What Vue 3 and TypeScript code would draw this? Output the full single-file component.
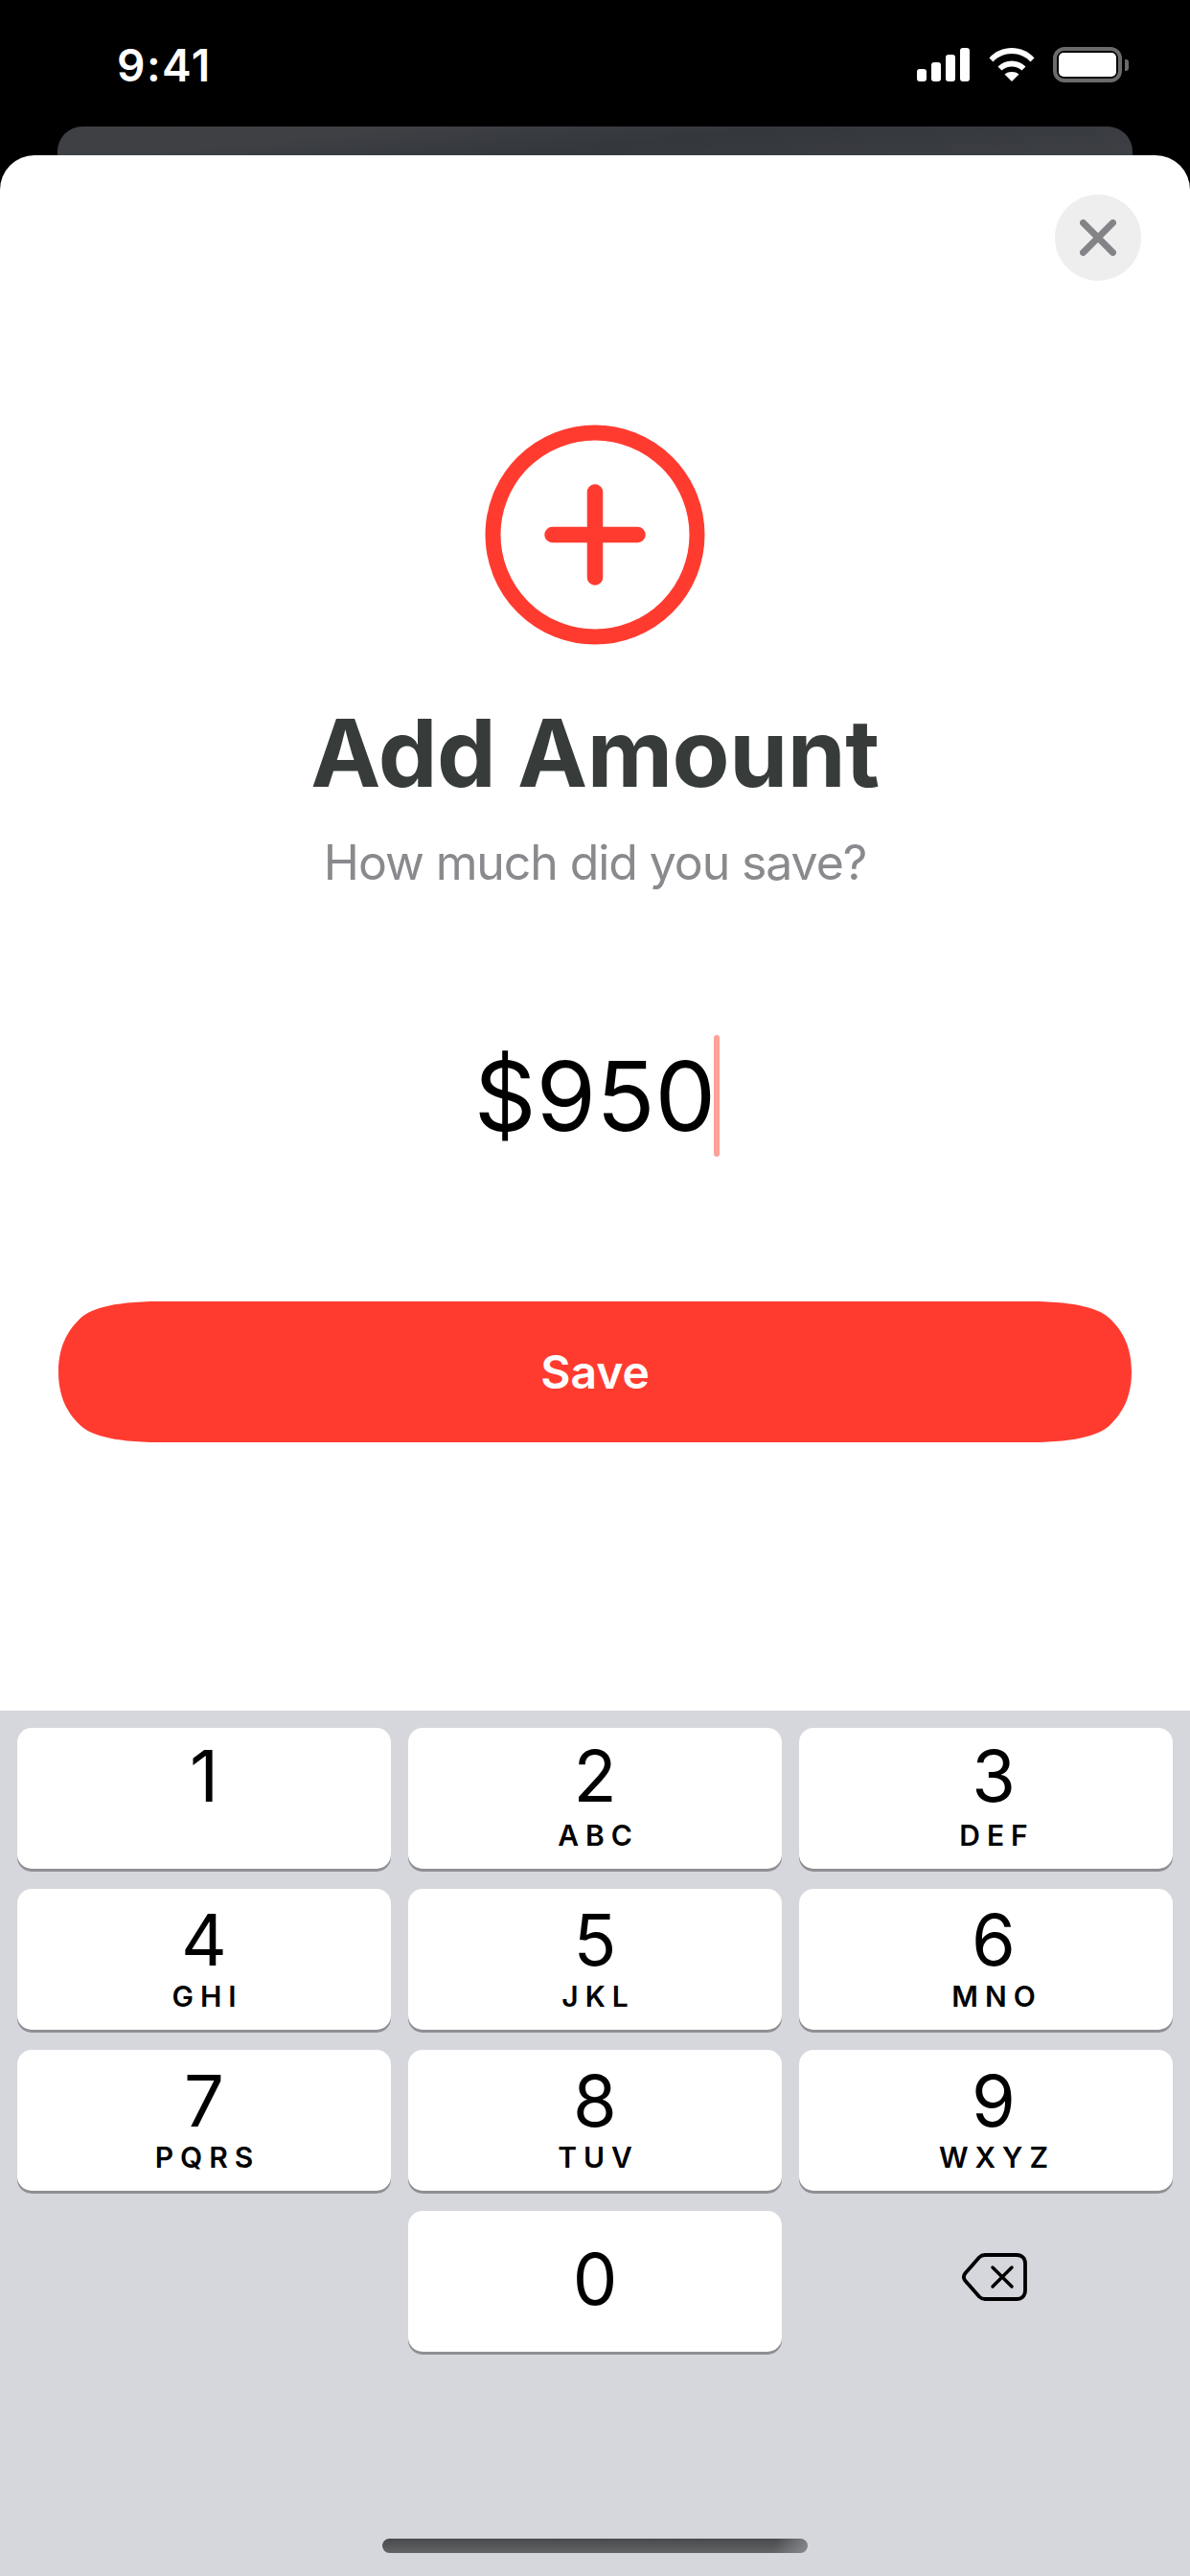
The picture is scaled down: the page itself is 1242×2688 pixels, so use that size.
<script setup lang="ts">
interface Key { digit: string; letters: string; }
const keys: Key[] = [
  { digit: '1', letters: '' },
  { digit: '2', letters: 'ABC' },
  { digit: '3', letters: 'DEF' },
  { digit: '4', letters: 'GHI' },
  { digit: '5', letters: 'JKL' },
  { digit: '6', letters: 'MNO' },
  { digit: '7', letters: 'PQRS' },
  { digit: '8', letters: 'TUV' },
  { digit: '9', letters: 'WXYZ' },
];
</script>

<template>
  <div class="screen">
    <header class="status">
      <span class="time">9:41</span>
      <div class="status-icons">
        <div class="signal">
          <i class="b1"></i><i class="b2"></i><i class="b3"></i><i class="b4"></i>
        </div>
        <svg class="wifi" width="48" height="36" viewBox="0 0 48 36">
          <path d="M0.5 11.500C6.500 4.500 15 1 24 1s17.500 3.500 23.500 10.500L43.500 15.500C38.500 10 31.500 7 24 7S9.500 10 4.500 15.500Z" fill="#fff"/>
          <path d="M9.500 20.500C13.500 16.500 18.500 14.500 24 14.500s10.500 2 14.500 6L34.500 24.500C31.500 21.800 28 20.500 24 20.500s-7.500 1.300-10.500 4Z" fill="#fff"/>
          <path d="M16.500 28.500C18.500 26.800 21 26 24 26s5.500.8 7.500 2.500L24 36Z" fill="#fff"/>
        </svg>
        <div class="battery">
          <div class="battery-body"><div class="battery-fill"></div></div>
          <div class="battery-nub"></div>
        </div>
      </div>
    </header>

    <div class="backdrop"></div>

    <main class="sheet">
      <button class="close" aria-label="Close">
        <svg width="38" height="38" viewBox="0 0 38 38">
          <path d="M3.500 3.500L34.500 34.500M34.500 3.500L3.500 34.500" stroke="#848488" stroke-width="7" stroke-linecap="round" fill="none"/>
        </svg>
      </button>

      <svg class="plus" width="230" height="230" viewBox="0 0 230 230">
        <circle cx="115" cy="115" r="106.500" fill="none" stroke="#ff3b30" stroke-width="16"/>
        <path d="M115 70.500V159.500M70.500 115H159.500" fill="none" stroke="#ff3b30" stroke-width="16.500" stroke-linecap="round"/>
      </svg>

      <h1 class="title">Add Amount</h1>
      <p class="subtitle">How much did you save?</p>

      <div class="amount">
        <span class="amount-text">$950</span>
        <span class="caret"></span>
      </div>

      <button class="save">Save</button>
    </main>

    <section class="keyboard">
      <div class="keys">
        <button
          v-for="(k, i) in keys"
          :key="k.digit"
          class="key"
          :class="{ 'first-row': i < 3, 'third-col': i % 3 === 2 }"
        >
          <span class="digit">{{ k.digit }}</span>
          <span class="letters">{{ k.letters }}</span>
        </button>
        <div class="blank"></div>
        <button class="key key-zero"><span class="digit">0</span></button>
        <div class="backspace">
          <svg width="68" height="50" viewBox="0 0 68 50">
            <path d="M24 2H57C62.500 2 66 5.500 66 11V39C66 44.500 62.500 48 57 48H24C21.500 48 19.500 47 18 45.500L3.500 29C1.500 26.500 1.500 23.500 3.500 21L18 4.500C19.500 3 21.500 2 24 2Z" fill="none" stroke="#000" stroke-width="3.800" stroke-linejoin="round"/>
            <path d="M32 15L52 35M52 15L32 35" fill="none" stroke="#000" stroke-width="3.500" stroke-linecap="round"/>
          </svg>
        </div>
      </div>
      <div class="home-indicator"></div>
    </section>
  </div>
</template>

<style>
html, body { margin: 0; background: #000; }
</style>

<style scoped>
.screen {
  width: 1242px;
  height: 2688px;
  background: #000;
  display: flex;
  flex-direction: column;
  overflow: hidden;
  font-family: Inter, "Liberation Sans", sans-serif;
}

/* Status bar */
.status {
  height: 132px;
  box-sizing: border-box;
  padding: 50px 64px 0 122px;
  display: flex;
  justify-content: space-between;
  align-items: flex-start;
  color: #fff;
}
.time {
  font-size: 46px;
  font-weight: 600;
  line-height: 36px;
  letter-spacing: 1.5px;
}
.status-icons {
  display: flex;
  align-items: flex-start;
  height: 37px;
  margin-top: -1px;
}
.signal {
  display: flex;
  align-items: flex-end;
  gap: 5px;
  height: 36px;
  margin-right: 20px;
}
.signal i {
  display: block;
  width: 10px;
  background: #fff;
  border-radius: 3px;
}
.b1 { height: 13px; }
.b2 { height: 20px; }
.b3 { height: 28px; }
.b4 { height: 35px; }
.wifi { margin-right: 19px; }
.battery {
  display: flex;
  align-items: center;
  gap: 3px;
  height: 37px;
}
.battery-body {
  width: 72px;
  height: 37px;
  box-sizing: border-box;
  border: 4px solid #6b6b6b;
  border-radius: 12px;
  padding: 2px;
}
.battery-fill {
  width: 100%;
  height: 100%;
  background: #fff;
  border-radius: 5px;
}
.battery-nub {
  width: 4px;
  height: 12px;
  background: #6b6b6b;
  border-radius: 0 3px 3px 0;
}

/* Card peeking behind the sheet */
.backdrop {
  height: 30px;
  margin: 0 60px;
  border-radius: 26px 26px 0 0;
  background:
    linear-gradient(174deg, rgba(64, 66, 70, 0.6) 0 25%, rgba(46, 49, 56, 0.5) 55%, rgba(64, 66, 70, 0.5) 100%),
    #3a3d41;
  flex: none;
}

/* Sheet */
.sheet {
  position: relative;
  flex: none;
  height: 1623px;
  box-sizing: border-box;
  background: #fff;
  border-radius: 36px 36px 0 0;
  padding: 281px 61px 0;
  display: flex;
  flex-direction: column;
  align-items: center;
}
.close {
  position: absolute;
  top: 41px;
  right: 51px;
  width: 90px;
  height: 90px;
  border: none;
  padding: 0;
  border-radius: 50%;
  background: #eeeeef;
  display: flex;
  align-items: center;
  justify-content: center;
}
.plus { display: block; flex: none; }
.title {
  margin: 55px 0 0;
  font-size: 98px;
  line-height: 116px;
  font-weight: 700;
  color: #373c3a;
  letter-spacing: -0.5px;
}
.subtitle {
  margin: 26px 0 0;
  font-size: 50px;
  line-height: 60px;
  font-weight: 400;
  color: #8a8a8e;
  letter-spacing: -1.1px;
}
.amount {
  margin-top: 149px;
  display: flex;
  align-items: center;
  height: 128px;
  margin-left: 4px;
}
.amount-text {
  font-size: 101px;
  line-height: 128px;
  font-weight: 400;
  color: #000;
}
.caret {
  width: 6px;
  height: 127px;
  margin-left: -2px;
  border-radius: 3px;
  background: #ffa09b;
}
.save {
  margin-top: 151px;
  width: 1120px;
  height: 147px;
  flex: none;
  border: none;
  clip-path: path("M0 73.500C0 48 9 31 22 18.500C31 9 54 0 105 0H1015C1066 0 1089 9 1098 18.500C1111 31 1120 48 1120 73.500C1120 99 1111 116 1098 128.500C1089 138 1066 147 1015 147H105C54 147 31 138 22 128.500C9 116 0 99 0 73.500Z");
  background: #ff3b30;
  color: #fff;
  font-family: inherit;
  font-size: 48px;
  font-weight: 600;
}

/* Keyboard */
.keyboard {
  position: relative;
  flex: 1;
  background: #d6d7dc;
  padding: 18px 18px 0;
}
.keys {
  display: grid;
  grid-template-columns: repeat(3, 390px);
  grid-auto-rows: 147px;
  column-gap: 18px;
  row-gap: 21px;
}
.key {
  border: none;
  padding: 0;
  background: #fff;
  border-radius: 15px;
  box-shadow: 0 3px 0 #8e8e93;
  display: flex;
  flex-direction: column;
  align-items: center;
  color: #000;
  font-family: inherit;
}
.third-col { padding-left: 16px; }
.digit {
  margin-top: 25px;
  font-size: 74px;
  line-height: 56px;
  font-weight: 400;
}
.first-row .digit {
  margin-top: 22px;
  margin-bottom: 3px;
}
.letters {
  margin-top: 16px;
  font-size: 30px;
  line-height: 30px;
  font-weight: 600;
  letter-spacing: 7px;
  margin-right: -7px;
}
.key-zero { justify-content: center; }
.key-zero .digit { margin-top: -5px; }
.backspace {
  display: flex;
  align-items: center;
  justify-content: center;
  padding-left: 17px;
  margin-top: -9px;
}
.home-indicator {
  position: absolute;
  left: 399px;
  top: 864px;
  width: 444px;
  height: 15px;
  border-radius: 8px;
  background:
    linear-gradient(100deg, transparent 0 92%, rgba(150, 150, 155, 0.75) 100%),
    linear-gradient(180deg, #48494b, #636467);
}
</style>
